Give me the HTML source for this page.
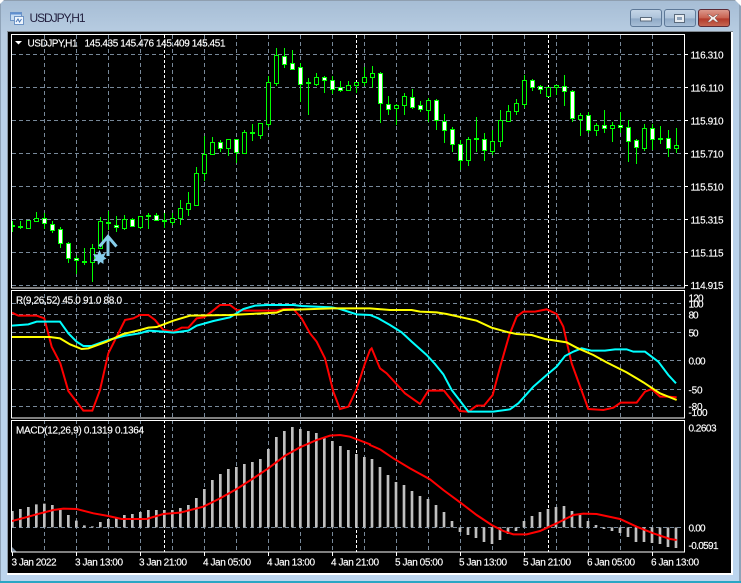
<!DOCTYPE html>
<html><head><meta charset="utf-8"><title>USDJPY,H1</title>
<style>html,body{margin:0;padding:0;background:#fff;width:741px;height:583px;overflow:hidden}svg{display:block}text{font-family:"Liberation Sans",sans-serif;font-size:10px;fill:#fff;stroke:#fff;stroke-width:.15px}</style></head>
<body>
<svg width="741" height="583" viewBox="0 0 741 583" xmlns="http://www.w3.org/2000/svg">
<defs>
<linearGradient id="bg" x1="0" y1="0" x2="0" y2="1"><stop offset="0" stop-color="#a6bdd5"/><stop offset=".06" stop-color="#b8cde2"/><stop offset=".2" stop-color="#b9d1ea"/><stop offset="1" stop-color="#bcd5ee"/></linearGradient>
<linearGradient id="btn" x1="0" y1="0" x2="0" y2="1"><stop offset="0" stop-color="#c6d6e8"/><stop offset=".5" stop-color="#adc3da"/><stop offset=".55" stop-color="#8fa9c6"/><stop offset="1" stop-color="#a9c0d8"/></linearGradient>
<linearGradient id="cls" x1="0" y1="0" x2="0" y2="1"><stop offset="0" stop-color="#dd9c90"/><stop offset=".5" stop-color="#c8604f"/><stop offset=".55" stop-color="#b23a2a"/><stop offset="1" stop-color="#c86a56"/></linearGradient>
<clipPath id="c1"><rect x="12" y="35" width="672" height="253"/></clipPath>
<clipPath id="c2"><rect x="12" y="291" width="672" height="127"/></clipPath>
<clipPath id="c3"><rect x="12" y="421" width="672" height="131"/></clipPath>
</defs>
<rect width="741" height="583" fill="url(#bg)"/>
<rect x="0" y="0" width="741" height="1" fill="#8f9fb0"/>
<rect x="0" y="0" width="1" height="583" fill="#8fa3b8"/>
<rect x="739" y="0" width="2" height="583" fill="#8fa3b8"/>
<path d="M0 0h4L0 4zM741 0h-6l6 6z" fill="#fff"/>
<rect x="0" y="581" width="741" height="2" fill="#2aa6c4"/>
<!-- title icon -->
<rect x="10.500" y="12.500" width="11" height="8" fill="#c7dcf3" stroke="#6d93c4"/>
<rect x="10.500" y="12.500" width="11" height="2" fill="#5f8fd0"/>
<rect x="14.500" y="16.500" width="9" height="8" fill="#eef5fd" stroke="#6d93c4"/>
<path d="M16 22l2-3 1.500 3 2-3" fill="none" stroke="#4b79b8"/>
<text x="29.500" y="22" style="font-size:12px;fill:#23203f;stroke:none" textLength="56">USDJPY,H1</text>
<!-- buttons -->
<rect x="630.500" y="9.500" width="31" height="17" rx="2.500" fill="url(#btn)" stroke="#5d7897"/>
<rect x="640.500" y="17.500" width="11" height="3.500" fill="#f2f4f6" stroke="#5a6a7c"/>
<rect x="664.500" y="9.500" width="31" height="17" rx="2.500" fill="url(#btn)" stroke="#5d7897"/>
<rect x="674.500" y="14.500" width="10" height="8" fill="#e8edf2" stroke="#5a6a7c"/>
<rect x="677" y="17" width="5" height="3" fill="#8fa3ba"/>
<rect x="698.500" y="9.500" width="31" height="17" rx="2.500" fill="url(#cls)" stroke="#5c2a36"/>
<path d="M709.500 14.500l3.500 2.500 3.500-2.500 2 0-3.500 3.500 3.500 4h-2.500l-3-2.500-3 2.500h-2.500l3.500-4-3.500-3.500z" fill="#f4f0ee" stroke="#6e4a48" stroke-width=".5"/>
<!-- client -->
<rect x="7" y="31" width="726" height="544" fill="#fff"/>
<rect x="7" y="31" width="726" height="1" fill="#7f8890"/>
<rect x="7" y="32" width="1" height="541" fill="#8a97a5"/>
<rect x="8" y="32" width="723" height="541" fill="#000"/>
<!-- grids -->
<g fill="none" stroke="#778899" stroke-width="1" stroke-dasharray="4 3">
<path d="M44.500 35V552M76.500 35V552M108.500 35V552M140.500 35V552M172.500 35V552M204.500 35V552M236.500 35V552M268.500 35V552M300.500 35V552M332.500 35V552M364.500 35V552M396.500 35V552M428.500 35V552M460.500 35V552M492.500 35V552M524.500 35V552M556.500 35V552M588.500 35V552M620.500 35V552M652.500 35V552"/>
<path d="M12 54.500H684M12 87.500H684M12 120.500H684M12 153.500H684M12 186.500H684M12 219.500H684M12 252.500H684M12 285.500H684"/>
<path d="M12 303.500H684M12 314.500H684M12 332.500H684M12 360.500H684M12 389.500H684M12 406.500H684"/>
<path d="M12 527.500H684"/>
</g>
<path d="M164.500 35V552M356.500 35V552M548.500 35V552" fill="none" stroke="#fff" stroke-dasharray="3 2"/>
<!-- MACD histogram -->
<g clip-path="url(#c3)">
<g transform="translate(0 415) scale(.33333)" fill="none" stroke="#c0c0c0" stroke-width="8">
<path d="M37 337V288M61 337V282M85 337V276M109 337V268M133 337V266M157 337V270M181 337V285M205 337V300M229 337V317M253 337V331M277 337V334M301 337V321M325 337V312M349 337V306M373 337V300M397 337V297M421 337V291M445 337V285M469 337V285M493 337V285M517 337V285M541 337V279M565 337V270M589 337V249M613 337V222M637 337V195M661 337V177M685 337V162M709 337V156M733 337V147M757 337V141M781 337V132M805 337V102M829 337V66M853 337V48M877 337V36M901 337V42M925 337V48M949 337V54M973 337V66M997 337V78M1021 337V93M1045 337V105M1069 337V117M1093 337V126"/>
<g transform="translate(1110 0)"><path d="M6 337V132M30 337V156M54 337V180M78 337V201M102 337V210M126 337V228M150 337V243M174 337V252M198 337V270M222 337V291M246 337V318M270 337V351M294 337V360M318 337V369M342 337V381M366 337V387M390 337V375M414 337V357M438 337V348M462 337V318M486 337V303M510 337V291M534 337V282M558 337V276M582 337V273M606 337V288M630 337V300M654 337V318M678 337V330M702 337V342M726 337V348M750 337V354M774 337V366M798 337V381M822 337V381M846 337V384M870 337V387M894 337V396M918 337V399"/></g>
<polyline stroke="#f00" stroke-width="6" points="36,318 85,305 110,298 160,285 190,281 230,282 280,295 325,303 365,312 440,312 490,297 540,293 610,275 660,250 710,222 760,190 805,160 855,122 900,97 950,75 990,62 1020,60 1050,65 1110,88 1110,90 1140,103 1180,130 1230,160 1290,193 1330,225 1380,262 1430,300 1475,330 1510,348 1540,358 1580,358 1620,348 1670,325 1720,300 1750,296 1790,297 1860,312 1910,335 1960,355 2010,372 2030,375"/>
</g></g>
<path d="M12 547l5 5h-5z" fill="#778899"/>
<!-- R indicator -->
<g clip-path="url(#c2)"><g transform="translate(0 285) scale(.33333)" fill="none" stroke-width="6">
<polyline stroke="#f00" points="36,83 55,92 110,92 133,100 155,185 181,235 205,318 250,377 277,377 300,315 325,205 350,155 375,105 400,100 420,90 445,90 465,105 490,135 520,140 545,128 565,128 590,100 612,97 635,80 660,60 690,60 710,75 740,77 830,77 850,72 880,72 905,100 930,145 950,170 975,220 1000,320 1020,372 1045,365 1070,312 1095,235 1110,195 1115,190 1140,250 1160,265 1215,325 1260,357 1285,317 1332,317 1380,378 1405,380 1430,362 1452,362 1478,330 1502,240 1528,150 1550,95 1570,80 1605,80 1640,73 1670,87 1690,125 1700,170 1715,235 1765,372 1810,375 1840,368 1862,353 1910,353 1935,320 1955,312 1980,335 2005,335 2030,337"/>
<polyline stroke="#0ff" points="36,122 85,118 110,110 180,110 205,145 230,170 250,183 275,183 325,165 375,152 420,145 445,137 490,140 520,143 565,137 590,122 640,108 690,97 730,72 765,62 800,60 880,60 905,63 995,67 1020,72 1070,88 1110,90 1135,100 1170,120 1205,142 1235,170 1280,210 1305,237 1330,268 1355,315 1405,380 1480,380 1530,373 1555,355 1600,305 1640,270 1670,245 1695,213 1720,200 1745,190 1775,197 1815,197 1845,193 1880,193 1900,200 1935,200 1975,230 2005,270 2028,295"/>
<polyline stroke="#ff0" points="36,156 150,156 180,160 210,178 245,192 265,190 320,170 370,147 420,135 445,128 470,126 520,107 570,92 690,90 830,83 850,75 1000,70 1110,70 1170,75 1235,75 1260,80 1310,82 1340,87 1430,107 1475,128 1525,142 1550,147 1595,150 1635,162 1700,172 1730,188 1780,210 1820,232 1880,262 1930,292 1980,325 2030,345"/>
</g></g>
<!-- candles -->
<g clip-path="url(#c1)">
<path fill="none" stroke="#0f0" d="M12.500 221V232M20.500 221V229M36.500 212V221M44.500 213V229M52.500 221V233M60.500 227V248M68.500 242V263M76.500 256V274M84.500 248V265M92.500 244V282M100.500 217V249M108.500 211V230M116.500 216V232M124.500 215V230M132.500 218V227M140.500 216V229M148.500 213V229M156.500 213V221M164.500 213V228M172.500 213V225M180.500 200V225M188.500 192V216M196.500 167V205M204.500 136V181M212.500 137V154M220.500 140V152M228.500 139V156M236.500 139V163M244.500 130V154M252.500 124V141M260.500 123V139M268.500 76V127M276.500 48V86M284.500 48V68M292.500 50V70M300.500 63V102M308.500 78V115M316.500 73V86M324.500 76V93M332.500 76V94M340.500 81V92M348.500 81V90M356.500 82V93M364.500 67V86M372.500 66V88M380.500 72V123M388.500 96V115M396.500 104V125M404.500 93V115M412.500 89V109M420.500 101V112M428.500 98V122M436.500 99V130M444.500 114V143M452.500 127V152M460.500 140V170M468.500 137V166M476.500 117V152M484.500 133V161M492.500 130V155M500.500 110V147M508.500 105V122M516.500 99V115M524.500 75V108M532.500 79V91M540.500 85V94M548.500 87V96M556.500 85V95M564.500 75V106M572.500 90V122M580.500 113V136M588.500 112V133M596.500 123V136M604.500 110V133M612.500 122V142M620.500 112V133M628.500 120V162M636.500 139V164M644.500 124V151M652.500 124V150M660.500 126V144M668.500 130V157M676.500 128V153"/>
<path fill="#000" stroke="#0f0" d="M26.500 220.500h4v8h-4zM34.500 218.500h4v3h-4zM90.500 248.500h4v14h-4zM98.500 221.500h4v27h-4zM122.500 219.500h4v9h-4zM138.500 216.500h4v11h-4zM170.500 218.500h4v4h-4zM178.500 208.500h4v10h-4zM186.500 203.500h4v6h-4zM194.500 173.500h4v32h-4zM202.500 154.500h4v19h-4zM210.500 142.500h4v12h-4zM226.500 139.500h4v9h-4zM242.500 132.500h4v21h-4zM258.500 123.500h4v12h-4zM266.500 82.500h4v42h-4zM274.500 55.500h4v28h-4zM314.500 77.500h4v7h-4zM346.500 85.500h4v5h-4zM354.500 82.500h4v3h-4zM362.500 77.500h4v5h-4zM370.500 73.500h4v4h-4zM394.500 105.500h4v3h-4zM402.500 96.500h4v9h-4zM426.500 100.500h4v10h-4zM466.500 139.500h4v21h-4zM490.500 141.500h4v10h-4zM498.500 120.500h4v21h-4zM506.500 111.500h4v10h-4zM514.500 103.500h4v8h-4zM522.500 80.500h4v24h-4zM546.500 87.500h4v9h-4zM554.500 85.500h4v2h-4zM578.500 115.500h4v4h-4zM594.500 125.500h4v5h-4zM610.500 125.500h4v3h-4zM642.500 128.500h4v20h-4zM674.500 145.500h4v3h-4z"/>
<path fill="#fff" stroke="#0f0" d="M42.500 218.500h4v5h-4zM50.500 224.500h4v6h-4zM58.500 229.500h4v14h-4zM66.500 243.500h4v15h-4zM74.500 258.500h4v2h-4zM114.500 225.500h4v2h-4zM130.500 219.500h4v7h-4zM154.500 215.500h4v5h-4zM218.500 142.500h4v6h-4zM234.500 139.500h4v13h-4zM282.500 56.500h4v8h-4zM290.500 63.500h4v6h-4zM298.500 67.500h4v17h-4zM322.500 77.500h4v3h-4zM330.500 80.500h4v9h-4zM338.500 87.500h4v3h-4zM378.500 73.500h4v30h-4zM386.500 104.500h4v5h-4zM410.500 97.500h4v10h-4zM418.500 105.500h4v4h-4zM434.500 100.500h4v20h-4zM442.500 121.500h4v9h-4zM450.500 129.500h4v15h-4zM458.500 144.500h4v16h-4zM482.500 139.500h4v11h-4zM530.500 80.500h4v7h-4zM538.500 86.500h4v3h-4zM562.500 86.500h4v5h-4zM570.500 91.500h4v27h-4zM586.500 115.500h4v15h-4zM602.500 125.500h4v3h-4zM618.500 125.500h4v2h-4zM626.500 127.500h4v14h-4zM634.500 140.500h4v7h-4zM650.500 128.500h4v11h-4zM666.500 138.500h4v10h-4z"/>
<path fill="none" stroke="#0f0" stroke-width="2" d="M10 226h5M18 227h5M82 262h5M106 223h5M146 216h5M162 221h5M250 133h5M306 83h5M474 139h5M658 139h5"/>
</g>
<!-- arrow and star -->
<path d="M99.500 246.500L108 236.500L116.500 246.500M108 237V256" fill="none" stroke="#87ceeb" stroke-width="3"/>
<polygon points="99.500,250 101.500,254.500 106,252.500 104,256.800 106.500,258.500 103.500,260 103.500,264 100.500,262 98,265 97.500,261 93,261 95.500,258 93,254 97.500,254.500" fill="#87ceeb"/>
<!-- frames -->
<g fill="none" stroke="#fff" stroke-width="1">
<rect x="11.500" y="34.500" width="673" height="253.500"/>
<rect x="11.500" y="290.500" width="673" height="127.500"/>
<rect x="11.500" y="420.500" width="673" height="131.500"/>
<path d="M685 54.500h3M685 87.500h3M685 120.500h3M685 153.500h3M685 186.500h3M685 219.500h3M685 252.500h3M685 285.500h3"/>
<path d="M12.500 552v4M76.500 552v4M140.500 552v4M204.500 552v4M268.500 552v4M332.500 552v4M396.500 552v4M460.500 552v4M524.500 552v4M588.500 552v4M652.500 552v4"/>
</g>
<path d="M15 41h7l-3.500 3.500z" fill="#fff"/>
<text x="27.500" y="46.500" textLength="50">USDJPY,H1</text>
<text x="84.500" y="46.500" textLength="141">145.435 145.476 145.409 145.451</text>
<text x="16" y="303.500" textLength="106">R(9,26,52) 45.0 91.0 88.0</text>
<text x="16" y="433.500" textLength="128">MACD(12,26,9) 0.1319 0.1364</text>
<g>
<text x="690.500" y="58.500" textLength="33">116.310</text>
<text x="690.500" y="91.500" textLength="33">116.110</text>
<text x="690.500" y="124.500" textLength="33">115.910</text>
<text x="690.500" y="157.500" textLength="33">115.710</text>
<text x="690.500" y="190.500" textLength="33">115.510</text>
<text x="690.500" y="223.500" textLength="33">115.315</text>
<text x="690.500" y="256.500" textLength="33">115.115</text>
<text x="690.500" y="289" textLength="33">114.915</text>
<text x="688.500" y="301.500" textLength="15">120</text>
<text x="688.500" y="307.500" textLength="15">100</text>
<text x="688.500" y="318.500" textLength="10">80</text>
<text x="688.500" y="336.500" textLength="10">50</text>
<text x="688.500" y="364.500" textLength="17">0.00</text>
<text x="688.500" y="393.500" textLength="14">-50</text>
<text x="688.500" y="410" textLength="14">-80</text>
<text x="688.500" y="416" textLength="19">-100</text>
<text x="688.500" y="431.500" textLength="28">0.2603</text>
<text x="688.500" y="531.500" textLength="17">0.00</text>
<text x="688.500" y="549" textLength="30">-0.0591</text>
</g>
<g>
<text x="11.500" y="565.500" textLength="45">3 Jan 2022</text>
<text x="75" y="565.500" textLength="48">3 Jan 13:00</text>
<text x="139" y="565.500" textLength="48">3 Jan 21:00</text>
<text x="203" y="565.500" textLength="48">4 Jan 05:00</text>
<text x="267" y="565.500" textLength="48">4 Jan 13:00</text>
<text x="331" y="565.500" textLength="48">4 Jan 21:00</text>
<text x="395" y="565.500" textLength="48">5 Jan 05:00</text>
<text x="459" y="565.500" textLength="48">5 Jan 13:00</text>
<text x="523" y="565.500" textLength="48">5 Jan 21:00</text>
<text x="587" y="565.500" textLength="48">6 Jan 05:00</text>
<text x="651" y="565.500" textLength="48">6 Jan 13:00</text>
</g>
</svg>
</body></html>
